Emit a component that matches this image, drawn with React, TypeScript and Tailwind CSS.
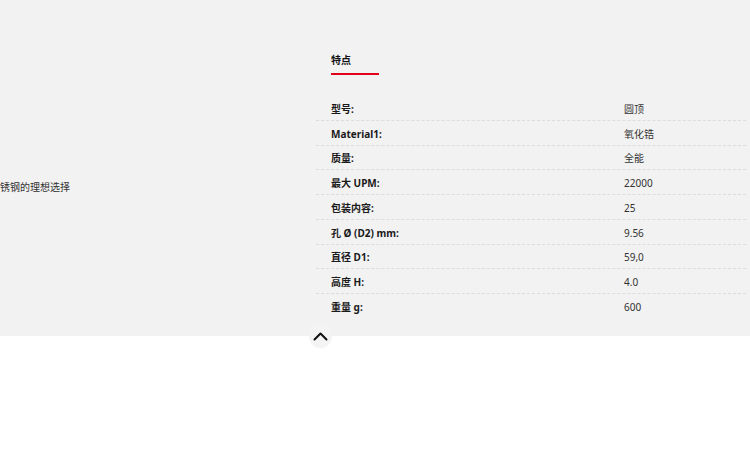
import React from "react";

const rows: [string, string][] = [
  ["型号:", "圆顶"],
  ["Material1:", "氧化锆"],
  ["质量:", "全能"],
  ["最大 UPM:", "22000"],
  ["包装内容:", "25"],
  ["孔 Ø (D2) mm:", "9.56"],
  ["直径 D1:", "59,0"],
  ["高度 H:", "4.0"],
  ["重量 g:", "600"],
];

export default function App() {
  return (
    <div
      className="relative w-[750px] h-[454px] bg-white overflow-hidden text-[10px] text-[#222]"
      style={{ fontFamily: '"Noto Sans", "Noto Sans CJK SC", sans-serif' }}
    >
      <div className="flex h-[336px] bg-[#f2f2f2]">
        <div className="w-[316px] pt-[180px]">
          <p className="leading-[14px] text-[#333] whitespace-nowrap">锈钢的理想选择</p>
        </div>
        <div className="w-[430px] pt-[52px]">
          <div className="pl-[15px]">
            <h3 className="font-bold leading-[16px] text-[#111]">特点</h3>
            <div className="mt-[5px] h-[2px] w-[48px] bg-[#e2001a]" />
          </div>
          <div className="mt-[21px]">
            {rows.map(([k, v], i) => (
              <div
                key={k}
                className={`flex items-center h-[24.75px] pt-[3px] px-[15px] ${
                  i < rows.length - 1 ? "border-b border-dashed border-[#dcdcdc]" : ""
                }`}
              >
                <span className="w-[293px] font-bold text-[#1a1a1a]">{k}</span>
                <span className="text-[#333]">{v}</span>
              </div>
            ))}
          </div>
        </div>
      </div>
      <div className="absolute left-[309px] top-[325px] w-[23px] h-[23px] rounded-full bg-[#f4f4f4] flex items-center justify-center">
        <svg width="15" height="9" viewBox="0 0 15 9" fill="none">
          <path d="M1.5 7.5 L7.5 1.5 L13.5 7.5" stroke="#111" strokeWidth="2" strokeLinecap="round" strokeLinejoin="round" />
        </svg>
      </div>
    </div>
  );
}
